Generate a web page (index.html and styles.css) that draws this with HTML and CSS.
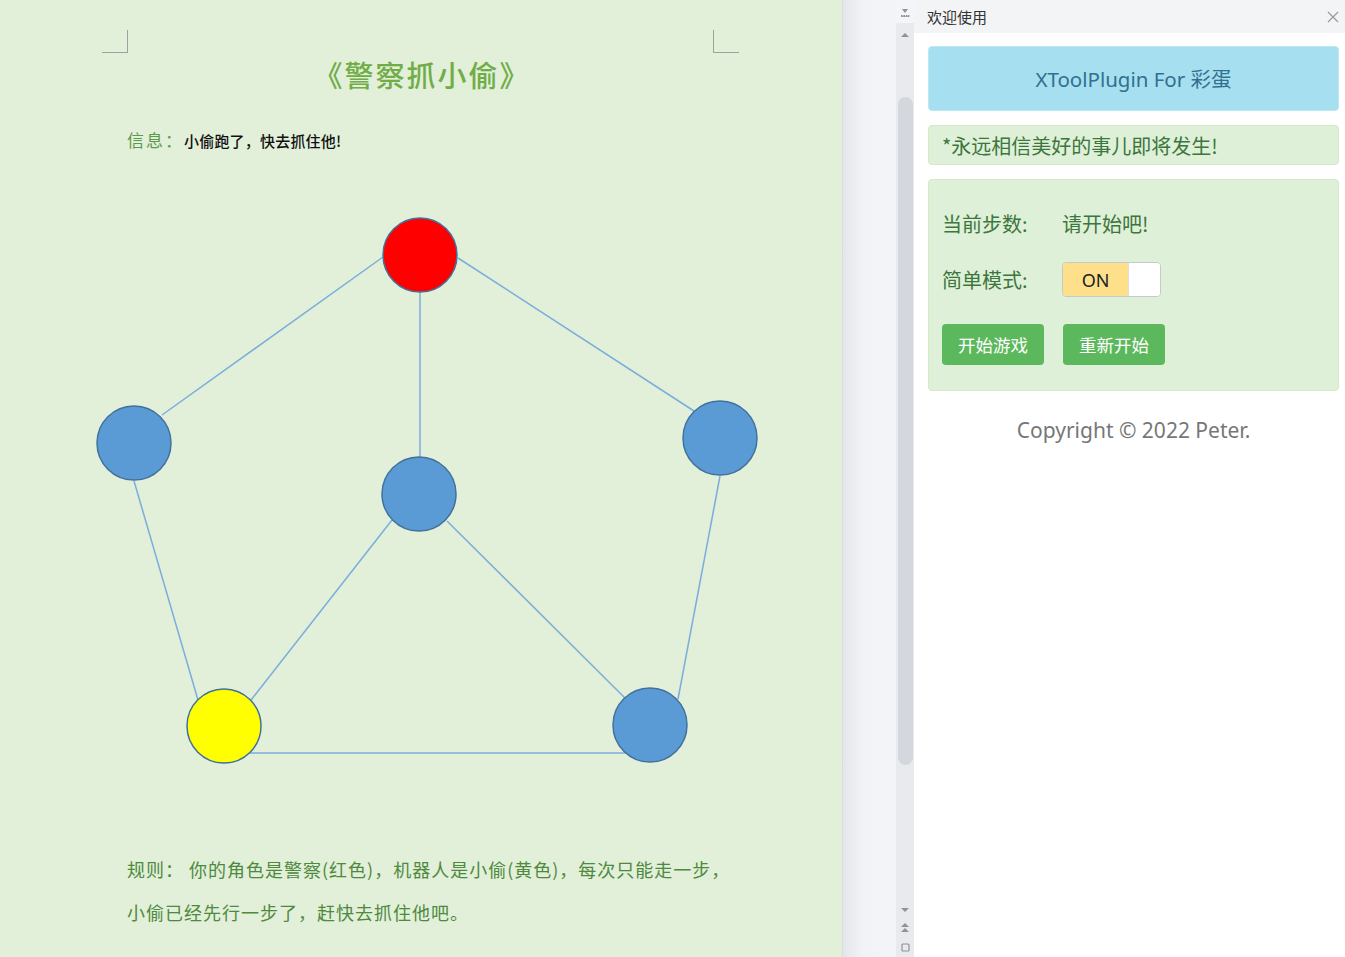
FILE: index.html
```html
<!DOCTYPE html>
<html lang="zh-CN">
<head>
<meta charset="utf-8">
<title>警察抓小偷</title>
<link rel="stylesheet" href="styles.css">
</head>
<body>
<div class="app">
  <main class="doc">
    <div class="corners">
      <span class="corner corner-left"></span>
      <span class="corner corner-right"></span>
    </div>
    <h1 class="title">《警察抓小偷》</h1>
    <p class="info"><span class="info-label">信息：</span><span class="info-text">小偷跑了，快去抓住他!</span></p>
    <svg class="graph" width="843" height="620" viewBox="0 170 843 620">
      <g class="edges">
        <line x1="383" y1="257" x2="162" y2="415"/>
        <line x1="458" y1="258" x2="694" y2="411"/>
        <line x1="420" y1="292" x2="420" y2="457"/>
        <line x1="134" y1="481" x2="198" y2="700"/>
        <line x1="720" y1="476" x2="678" y2="699"/>
        <line x1="392" y1="520" x2="251" y2="700"/>
        <line x1="447" y1="521" x2="626" y2="699"/>
        <line x1="248" y1="753" x2="626" y2="753"/>
      </g>
      <g class="nodes">
        <circle class="police" cx="420" cy="255" r="37"/>
        <circle class="empty" cx="134" cy="443" r="37"/>
        <circle class="empty" cx="720" cy="438" r="37"/>
        <circle class="empty" cx="419" cy="494" r="37"/>
        <circle class="thief" cx="224" cy="726" r="37"/>
        <circle class="empty" cx="650" cy="725" r="37"/>
      </g>
    </svg>
    <div class="rules">
      <p>规则： 你的角色是警察(红色)，机器人是小偷(黄色)，每次只能走一步，</p>
      <p>小偷已经先行一步了，赶快去抓住他吧。</p>
    </div>
  </main>
  <div class="gutter"></div>
  <div class="scrollbar">
    <div class="sb-top">
      <svg width="10" height="10" viewBox="0 0 10 10"><path d="M2 1h6L5 5z" fill="#8d929c"/><path d="M1 7h1.6v2H1zM3.4 7h1.6v2H3.4zM5.8 7h1.6v2H5.8zM8 7h1.4v2H8zM1 8.4h8.4V9H1z" fill="#8d929c"/></svg>
    </div>
    <div class="sb-track">
      <svg class="sb-arrow" width="8" height="6" viewBox="0 0 8 6"><path d="M0 5L4 1l4 4z" fill="#8d929c"/></svg>
      <div class="sb-thumb"></div>
      <div class="sb-bottom">
        <svg width="8" height="6" viewBox="0 0 8 6"><path d="M0 1h8L4 5z" fill="#8d929c"/></svg>
        <svg width="8" height="10" viewBox="0 0 8 10"><path d="M0 4L4 0l4 4zM0 9L4 5l4 4z" fill="#8d929c"/></svg>
        <svg width="9" height="9" viewBox="0 0 9 9"><rect x="1" y="1" width="7" height="7" rx="1" fill="none" stroke="#8d929c" stroke-width="1.2"/></svg>
      </div>
    </div>
  </div>
  <aside class="panel">
    <header class="panel-head">
      <span class="panel-title">欢迎使用</span>
      <svg class="close" width="12" height="12" viewBox="0 0 12 12"><path d="M1 1l10 10M11 1L1 11" stroke="#9a9a9a" stroke-width="1.2"/></svg>
    </header>
    <div class="panel-body">
      <div class="alert alert-info">XToolPlugin For 彩蛋</div>
      <div class="alert alert-success motto">*永远相信美好的事儿即将发生!</div>
      <div class="alert alert-success controls">
        <div class="row">
          <span class="label">当前步数:</span>
          <span class="value">请开始吧!</span>
        </div>
        <div class="row">
          <span class="label">简单模式:</span>
          <span class="switch"><span class="switch-on">ON</span><span class="switch-knob"></span></span>
        </div>
        <div class="buttons">
          <button class="btn">开始游戏</button>
          <button class="btn">重新开始</button>
        </div>
      </div>
      <p class="copyright">Copyright © 2022 Peter.</p>
    </div>
  </aside>
</div>
</body>
</html>
```

FILE: styles.css
```css
* { box-sizing: border-box; }
html, body {
  margin: 0;
  padding: 0;
  width: 1345px;
  height: 957px;
  overflow: hidden;
  font-family: "Noto Sans", "Noto Sans CJK SC", sans-serif;
}
p { margin: 0; }

.app {
  display: flex;
  height: 957px;
}

/* document */
.doc {
  width: 843px;
  flex: none;
  background: #e2efd9;
  padding-top: 30px;
  border-right: 1px solid #d9dde0;
}
.corners {
  display: flex;
  justify-content: space-between;
  margin: 0 103px 0 102px;
  height: 22px;
}
.corner {
  width: 26px;
  height: 23px;
}
.corner-left {
  border-right: 1px solid #a0a0a0;
  border-bottom: 1px solid #a0a0a0;
}
.corner-right {
  border-left: 1px solid #a0a0a0;
  border-bottom: 1px solid #a0a0a0;
}
.title {
  margin: 4px 0 0 102px;
  width: 638px;
  text-align: center;
  font-family: "Noto Sans CJK SC", sans-serif;
  font-size: 29px;
  line-height: 36px;
  font-weight: 500;
  color: #70ad47;
  letter-spacing: 2px;
  text-indent: 2px;
}
.info {
  margin: 36px 0 0 127px;
  height: 24px;
  line-height: 24px;
  font-family: "Noto Sans CJK SC", sans-serif;
}
.info-label {
  font-size: 17px;
  color: #5b9a4b;
  letter-spacing: 2px;
}
.info-text {
  font-size: 15px;
  color: #111;
  font-weight: 500;
  letter-spacing: 0.2px;
}
.graph {
  display: block;
  margin-top: 18px;
}
.edges line {
  stroke: #7aaedc;
  stroke-width: 1.5;
}
.nodes circle {
  stroke: #41719c;
  stroke-width: 1.5;
}
.nodes .empty { fill: #5b9bd5; }
.nodes .police { fill: #ff0000; }
.nodes .thief { fill: #ffff00; }

.rules {
  margin: 58px 0 0 127px;
  font-family: "Noto Sans CJK SC", sans-serif;
  font-size: 18px;
  line-height: 43px;
  color: #4e8a3e;
  font-weight: 400;
  letter-spacing: 1px;
}

/* gutter & scrollbar */
.gutter {
  width: 53px;
  flex: none;
  background: linear-gradient(to right, #e4e6eb, #f1f2f6 35%, #f4f5f8);
}
.scrollbar {
  width: 18px;
  flex: none;
  display: flex;
  flex-direction: column;
  background: #f4f5f8;
}
.sb-top {
  height: 23px;
  display: flex;
  align-items: center;
  justify-content: center;
  padding-top: 2px;
}
.sb-track {
  flex: 1;
  background: #e8eaee;
  display: flex;
  flex-direction: column;
  align-items: center;
}
.sb-arrow {
  margin-top: 9px;
}
.sb-thumb {
  margin-top: 59px;
  width: 15px;
  height: 668px;
  border-radius: 8px;
  background: #d4d7dd;
}
.sb-bottom {
  margin-top: auto;
  padding-bottom: 5px;
  display: flex;
  flex-direction: column;
  align-items: center;
  gap: 10px;
}

/* panel */
.panel {
  flex: 1;
  background: #fff;
  display: flex;
  flex-direction: column;
}
.panel-head {
  height: 33px;
  background: #f3f4f6;
  display: flex;
  align-items: center;
  justify-content: space-between;
  padding: 0 6px 0 13px;
}
.panel-title {
  font-family: "Noto Sans CJK SC", sans-serif;
  font-size: 15px;
  color: #333;
  margin-top: -1px;
}
.panel-body {
  padding: 13px 6px 0 14px;
}
.alert {
  border: 1px solid transparent;
  border-radius: 4px;
}
.alert-info {
  height: 65px;
  background: #a6dff0;
  border-color: #bce8f1;
  color: #31708f;
  font-size: 20.5px;
  display: flex;
  align-items: center;
  justify-content: center;
  padding-bottom: 2px;
}
.alert-success {
  background: #dff0d8;
  border-color: #d6e9c6;
  color: #3c763d;
}
.motto {
  margin-top: 14px;
  height: 40px;
  padding-left: 13px;
  display: flex;
  align-items: center;
  font-family: "Noto Sans CJK SC", sans-serif;
  font-size: 20px;
  font-weight: 400;
}
.controls {
  margin-top: 14px;
  padding: 25px 13px 25px;
  font-family: "Noto Sans CJK SC", sans-serif;
  font-size: 20px;
  font-weight: 400;
}
.row {
  display: flex;
  align-items: center;
  height: 36px;
  margin-bottom: 21px;
}
.row + .row {
  height: 35px;
  margin-bottom: 27px;
}
.label {
  width: 120px;
  flex: none;
}
.switch {
  display: flex;
  width: 99px;
  height: 35px;
  border: 1px solid #c9c9c9;
  border-radius: 4px;
  overflow: hidden;
}
.switch-on {
  width: 65px;
  background: #fee08b;
  color: #222;
  font-family: "Noto Sans", sans-serif;
  font-weight: 400;
  font-size: 18px;
  display: flex;
  align-items: center;
  justify-content: center;
}
.switch-knob {
  flex: 1;
  background: #fff;
  border-left: 1px solid #ddd;
}
.buttons {
  display: flex;
  gap: 19px;
}
.btn {
  width: 102px;
  height: 41px;
  border: none;
  border-radius: 4px;
  background: #5cb85c;
  color: #fff;
  font-family: "Noto Sans CJK SC", sans-serif;
  font-size: 17.5px;
  padding: 0;
}
.copyright {
  margin-top: 25px;
  text-align: center;
  font-size: 21px;
  line-height: 28px;
  color: #777;
}
```
